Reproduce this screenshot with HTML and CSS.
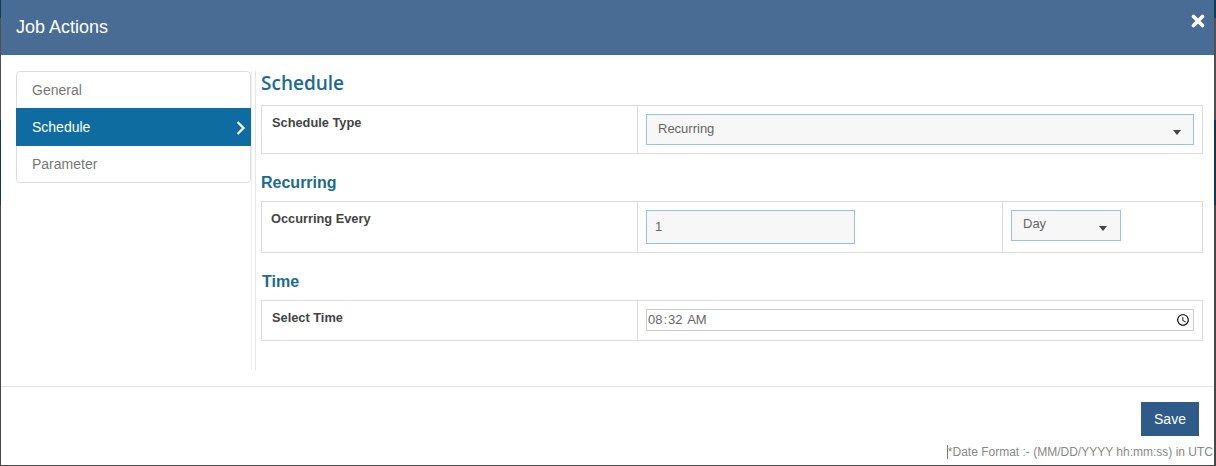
FILE: index.html
```html
<!DOCTYPE html>
<html lang="en">
<head>
    <meta charset="UTF-8">
    <meta name="viewport" content="width=device-width, initial-scale=1.0">
    <title>Job Actions</title>
    <link rel="stylesheet" href="styles.css">
</head>
<body>
    <div class="modal">
        <div class="modal-header">
            <div class="modal-title">Job Actions</div>
            <svg class="close" viewBox="0 0 14 14" width="14" height="14">
                <path d="M2.5 2.5 L11.5 11.5 M11.5 2.5 L2.5 11.5" stroke="#fff" stroke-width="3.6" stroke-linecap="round" fill="none"/>
            </svg>
        </div>
        <div class="modal-body">
            <div class="side">
                <div class="side-menu">
                    <div class="side-item">General</div>
                    <div class="side-item active">
                        Schedule
                        <svg class="chevron" viewBox="0 0 10 14" width="10" height="14">
                            <path d="M1.5 1 L7.5 7 L1.5 13" stroke="#fff" stroke-width="2.2" fill="none"/>
                        </svg>
                    </div>
                    <div class="side-item">Parameter</div>
                </div>
            </div>
            <div class="divider"></div>
            <div class="content">
                <h2 class="main-heading">Schedule</h2>
                <div class="row row-type">
                    <div class="cell-label">Schedule Type</div>
                    <div class="cell-field">
                        <div class="select select-wide">Recurring<span class="caret"></span></div>
                    </div>
                </div>
                <h3 class="sub-heading">Recurring</h3>
                <div class="row row-every">
                    <div class="cell-label label-every">Occurring Every</div>
                    <div class="cell-field field-every">
                        <div class="number-box">1</div>
                    </div>
                    <div class="cell-unit">
                        <div class="select select-day">Day<span class="caret"></span></div>
                    </div>
                </div>
                <h3 class="sub-heading heading-time">Time</h3>
                <div class="row row-time">
                    <div class="cell-label">Select Time</div>
                    <div class="cell-field">
                        <input class="time-box" type="time" value="08:32">
                    </div>
                </div>
            </div>
        </div>
        <div class="modal-footer">
            <button class="save">Save</button>
            <div class="note">*Date Format :- (MM/DD/YYYY hh:mm:ss) in UTC</div>
        </div>
    </div>
</body>
</html>
```

FILE: styles.css
```css
body {
    margin: 0;
    height: 466px;
    overflow: hidden;
    background: linear-gradient(#0f3d55 18px, #505050 18px, #505050 120px, #12384f 120px, #12384f 205px, #484848 205px);
    font-family: "Liberation Sans", Arial, sans-serif;
}

.modal {
    width: 1213px;
    height: 465px;
    margin-left: 1px;
    background-color: #fff;
    display: flex;
    flex-direction: column;
}

.modal-header {
    height: 55px;
    flex: none;
    background-color: #486c94;
    display: flex;
    justify-content: space-between;
    padding: 0 9px 0 15px;
    box-sizing: border-box;
}

.modal-title {
    margin-top: 17px;
    font-size: 18px;
    line-height: 20px;
    color: #fff;
}

.close {
    margin-top: 14px;
}

.modal-body {
    height: 332px;
    flex: none;
    display: flex;
    box-sizing: border-box;
    border-bottom: 1px solid #e5e5e5;
}

.side {
    width: 251px;
    height: 299px;
    margin-top: 16px;
    flex: none;
    padding-left: 15px;
    border-right: 1px solid #eee;
    box-sizing: border-box;
}

.divider {
    width: 1px;
    height: 299px;
    margin: 16px 0 0 3px;
    flex: none;
    background-color: #e5e5e5;
}

.side-menu {
    width: 235px;
    height: 112px;
    box-sizing: border-box;
    border: 1px solid #ddd;
    border-radius: 4px;
    background-color: #fff;
}

.side-item {
    height: 36px;
    padding-left: 15px;
    display: flex;
    align-items: center;
    justify-content: space-between;
    font-size: 14px;
    color: #777;
}

.side-item.active {
    height: 38px;
    margin: 0 -1px;
    padding-left: 16px;
    padding-right: 5px;
    background-color: #0f6ca0;
    color: #fff;
}

.chevron {
    margin-top: 1px;
}

.content {
    width: 942px;
    margin-top: 16px;
    margin-left: 5px;
}

.main-heading {
    margin: 0 0 9px;
    font-family: "Open Sans", sans-serif;
    font-size: 19px;
    line-height: 25px;
    font-weight: 600;
    color: #1a6a94;
}

.sub-heading {
    margin: 19px 0 8px;
    font-size: 16px;
    line-height: 20px;
    font-weight: bold;
    color: #1a6a94;
}

.heading-time {
    margin-left: 1px;
}

.row {
    display: flex;
    box-sizing: border-box;
    border: 1px solid #ddd;
}

.row-type {
    height: 49px;
}

.row-every {
    height: 52px;
}

.row-time {
    height: 41px;
}

.cell-label {
    width: 375px;
    flex: none;
    box-sizing: border-box;
    padding: 10px 0 0 10px;
    font-size: 12.8px;
    line-height: 14px;
    font-weight: bold;
    color: #444;
}

.label-every {
    padding-left: 9px;
}

.cell-field {
    flex: 1;
    box-sizing: border-box;
    padding: 8px 8px 0;
    border-left: 1px solid #ddd;
}

.field-every {
    flex: none;
    width: 365px;
}

.cell-unit {
    flex: 1;
    box-sizing: border-box;
    padding: 8px 0 0 8px;
    border-left: 1px solid #ddd;
}

.select {
    position: relative;
    box-sizing: border-box;
    border: 1px solid #9cc3d5;
    background-color: #f7f7f7;
    font-size: 13px;
    color: #666;
}

.select-wide {
    height: 31px;
    padding: 6px 11px;
}

.select-day {
    width: 110px;
    height: 31px;
    padding: 5px 11px;
}

.caret {
    position: absolute;
    right: 12px;
    top: 15px;
    border-top: 5px solid #444;
    border-left: 4px solid transparent;
    border-right: 4px solid transparent;
}

.select-day .caret {
    right: 13px;
}

.number-box {
    width: 209px;
    height: 34px;
    box-sizing: border-box;
    padding: 9px 8px;
    border: 1px solid #9cc3d5;
    background-color: #f7f7f7;
    font-size: 13px;
    line-height: 14px;
    color: #666;
}

.time-box {
    display: block;
    width: 100%;
    height: 22px;
    margin: 0;
    box-sizing: border-box;
    padding: 0;
    border: 1px solid #ccc;
    background-color: #fff;
    font-family: inherit;
    font-size: 13px;
    color: #666;
}

.modal-footer {
    flex: 1;
    display: flex;
    flex-direction: column;
    align-items: flex-end;
    padding-top: 15px;
}

.save {
    width: 58px;
    height: 34px;
    margin-right: 15px;
    border: none;
    background-color: #2f5b88;
    color: #fff;
    font-family: inherit;
    font-size: 14px;
}

.note {
    margin-top: 9px;
    margin-right: 1px;
    border-left: 1px solid #777;
    font-size: 12px;
    line-height: 14px;
    color: #888;
}
```
